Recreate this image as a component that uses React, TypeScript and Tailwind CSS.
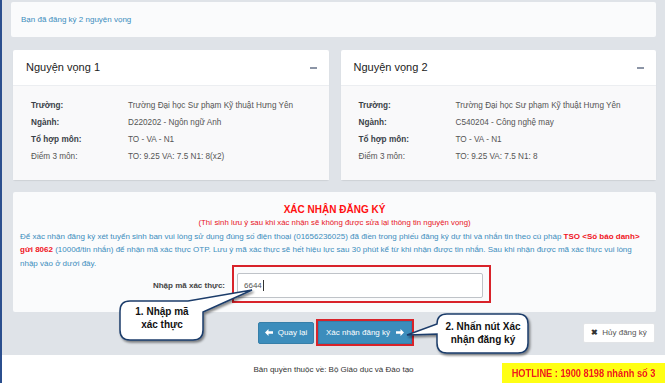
import React from "react";

function Minus() {
  return <span className="block w-[7px] h-[2px] bg-[#8c95a6]" />;
}

function NvCard({ title, rows }: { title: string; rows: { label: string; value: string; bold: boolean }[] }) {
  return (
    <div className="flex-1 flex flex-col bg-white rounded-[2px] shadow-[0_1px_1px_rgba(0,0,0,0.08)]">
      <div className="h-[36px] flex items-center justify-between pl-[13px] pr-[12px] border-b border-[#eceef1]">
        <span className="text-[11px] text-[#222]">{title}</span>
        <Minus />
      </div>
      <div className="flex-1 bg-[#f9f9fa] pt-[12px] pl-[18px] flex flex-col">
        {rows.map((r) => (
          <div key={r.label} className="flex h-[17px] items-center text-[8.2px] text-[#444]">
            <span className={"w-[97px] " + (r.bold ? "font-bold text-[#3a3f47]" : "text-[#555]")}>{r.label}</span>
            <span className="text-[#555]">{r.value}</span>
          </div>
        ))}
      </div>
    </div>
  );
}

export default function App() {
  return (
    <div className="relative w-[665px] h-[383px] overflow-hidden flex font-['Liberation_Sans',Arial,sans-serif]">
      <div className="w-[2px] bg-[#2b4f8e]" />
      <div className="flex-1 flex flex-col">
        <div className="bg-[#dfe3e8] pt-[2px] pb-[9px] flex flex-col">
          <div className="ml-[9px] mr-[9px] h-[35px] bg-[#fafbfc] rounded-[2px] flex items-center pl-[10px]">
            <span className="text-[8px] text-[#3c8dbc]">Bạn đã đăng ký 2 nguyện vọng</span>
          </div>
          <div className="ml-[11px] mr-[9px] mt-[13px] h-[130px] flex gap-[12px]">
            <NvCard
              title="Nguyện vọng 1"
              rows={[
                { label: "Trường:", value: "Trường Đại học Sư phạm Kỹ thuật Hưng Yên", bold: true },
                { label: "Ngành:", value: "D220202 - Ngôn ngữ Anh", bold: true },
                { label: "Tổ hợp môn:", value: "TO - VA - N1", bold: true },
                { label: "Điểm 3 môn:", value: "TO: 9.25 VA: 7.5 N1: 8(x2)", bold: false },
              ]}
            />
            <NvCard
              title="Nguyện vọng 2"
              rows={[
                { label: "Trường:", value: "Trường Đại học Sư phạm Kỹ thuật Hưng Yên", bold: true },
                { label: "Ngành:", value: "C540204 - Công nghệ may", bold: true },
                { label: "Tổ hợp môn:", value: "TO - VA - N1", bold: true },
                { label: "Điểm 3 môn:", value: "TO: 9.25 VA: 7.5 N1: 8", bold: false },
              ]}
            />
          </div>
          <div className="ml-[11px] mr-[9px] mt-[12px] h-[120px] bg-[#fafbfc] rounded-[2px] flex flex-col pt-[11px] px-[7px]">
            <div className="text-center text-[10px] leading-[14px] font-bold text-[#ff1010]">XÁC NHẬN ĐĂNG KÝ</div>
            <div className="text-center text-[7.8px] leading-[11.5px] text-[#e8141c]">
              (Thí sinh lưu ý sau khi xác nhận sẽ không được sửa lại thông tin nguyện vọng)
            </div>
            <div className="text-[8px] leading-[13.5px] text-[#3c8dbc] mt-[1px] whitespace-nowrap">
              <div>
                <span>Để xác nhận đăng ký xét tuyển sinh ban vui lòng sử dụng đúng số điện thoại (01656236025) đã điền trong phiếu đăng ký dự thi và nhắn tin theo cú pháp </span>
                <b className="text-[#f0141c]">TSO &lt;Số báo danh&gt;</b>
              </div>
              <div>
                <b className="text-[#f0141c]">gửi 8062</b>
                <span> (1000đ/tin nhắn) để nhận mã xác thực OTP. Lưu ý mã xác thực sẽ hết hiệu lực sau 30 phút kể từ khi nhận được tin nhắn. Sau khi nhận được mã xác thực vui lòng</span>
              </div>
              <div>
                <span>nhập vào ở dưới đây.</span>
              </div>
            </div>
            <div className="flex items-center mt-[3px] -ml-[7px]">
              <div className="w-[212px] text-right text-[8px] font-bold text-[#444]">Nhập mã xác thực:</div>
              <div className="relative ml-[12px] w-[246px] h-[25px]">
                <div className="absolute -left-[5px] -top-[8px] -right-[8px] -bottom-[5px] border-2 border-[#d8232a]" />
                <div className="relative h-[25px] bg-white border border-[#bfc3c8] rounded-[2px] flex items-center pl-[6px] text-[8px] text-[#555]">
                  6644<span className="w-px h-[11px] bg-[#333] ml-[1px]" />
                </div>
              </div>
            </div>
          </div>
          <div className="ml-[11px] mr-[10px] mt-[7px] h-[27px] flex items-center">
            <div className="w-[245px]" />
            <div className="w-[56px] h-[22px] bg-[#3c8dbc] border border-[#367fa9] rounded-[2px] flex items-center justify-center gap-[5px] text-white text-[8px]">
              <svg width="8" height="7" viewBox="0 0 8 7"><path d="M0 3.5 L3.5 0 L3.5 2.2 L8 2.2 L8 4.8 L3.5 4.8 L3.5 7 Z" fill="white" /></svg>
              Quay lại
            </div>
            <div className="ml-[2px] w-[98px] h-[27px] border-2 border-[#d8232a] p-0 flex">
              <div className="flex-1 bg-[#3c8dbc] border border-[#367fa9] flex items-center justify-center gap-[6px] text-white text-[8px]">
                Xác nhận đăng ký
                <svg width="8" height="7" viewBox="0 0 8 7"><path d="M8 3.5 L4.5 0 L4.5 2.2 L0 2.2 L0 4.8 L4.5 4.8 L4.5 7 Z" fill="white" /></svg>
              </div>
            </div>
            <div className="ml-auto w-[72px] h-[20px] bg-white border border-[#e2e4e7] rounded-[2px] flex items-center justify-center gap-[4px] text-[8px] text-[#555]">
              <span className="text-[8px] font-bold text-[#333]">✖</span>
              Hủy đăng ký
            </div>
          </div>
        </div>
        <div className="flex-1 bg-white flex items-center justify-center pt-[2px]">
          <span className="text-[8px] text-[#333]">Bản quyền thuộc về: Bộ Giáo dục và Đào tạo</span>
        </div>
      </div>

      <div className="absolute left-[502px] top-[363px] w-[163px] h-[20px] bg-[#ffff14] flex items-center justify-center">
        <span className="inline-block text-[11px] font-bold text-[#ee1c1c] whitespace-nowrap scale-x-[0.84]">HOTLINE : 1900 8198 nhánh số 3</span>
      </div>

      <svg className="absolute inset-0 pointer-events-none" width="665" height="383">
        <defs>
          <filter id="sh" x="-20%" y="-20%" width="140%" height="160%">
            <feDropShadow dx="1.5" dy="2" stdDeviation="1" floodColor="#000" floodOpacity="0.45" />
          </filter>
        </defs>
        <path
          d="M130 301 L188 301 L252 290 L203 312 L203 330 Q203 340 193 340 L130 340 Q120 340 120 330 L120 311 Q120 301 130 301 Z"
          fill="white"
          stroke="#1d3d6b"
          strokeWidth="1.5"
          filter="url(#sh)"
        />
        <path
          d="M447 314 L518 314 Q528 314 528 324 L528 343 Q528 353 518 353 L447 353 Q437 353 437 343 L437 334 L407 335 L437 324 Q437 314 447 314 Z"
          fill="white"
          stroke="#1d3d6b"
          strokeWidth="1.5"
          filter="url(#sh)"
        />
      </svg>
      <div className="absolute left-[120px] top-[305px] w-[84px] text-center text-[10px] leading-[13px] font-bold text-[#111]">
        1. Nhập mã
        <br />
        xác thực
      </div>
      <div className="absolute left-[437px] top-[320px] w-[92px] text-center text-[10px] leading-[13px] font-bold text-[#111]">
        2. Nhấn nút Xác
        <br />
        nhận đăng ký
      </div>
    </div>
  );
}
